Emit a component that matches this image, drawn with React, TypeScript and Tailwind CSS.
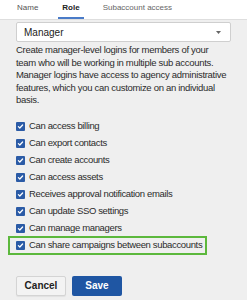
import React from "react";

const perms = [
  "Can access billing",
  "Can export contacts",
  "Can create accounts",
  "Can access assets",
  "Receives approval notification emails",
  "Can update SSO settings",
  "Can manage managers",
];

function Check() {
  return (
    <span className="w-[9px] h-[9px] rounded-[1px] bg-[#2b5ba6] flex items-center justify-center shrink-0">
      <svg width="7" height="7" viewBox="0 0 10 10" fill="none">
        <path d="M2 5.2l2 2 4-4.4" stroke="#fff" strokeWidth="1.8" strokeLinecap="round" strokeLinejoin="round" />
      </svg>
    </span>
  );
}

function Row({ label }: { label: string }) {
  return (
    <div className="h-[17px] flex items-center gap-[4px]">
      <Check />
      <span className="text-[9.5px] tracking-[-0.35px] text-[#2b2b2b]">{label}</span>
    </div>
  );
}

export default function App() {
  return (
    <div className="w-[247px] h-[300px] bg-[#efefef] overflow-hidden font-['Liberation_Sans',sans-serif]">
      <div className="h-[20px] bg-white border-b border-[#dedede] flex items-end pl-[17px] text-[8px]">
        <div className="relative pb-[5px] text-[#555] mr-[24px]">Name</div>
        <div className="relative pb-[5px] font-bold text-[#222] mr-[23px]">
          Role
          <span className="absolute left-[-4px] right-[-4px] bottom-0 h-[2px] bg-[#4a7bc8]" />
        </div>
        <div className="pb-[5px] text-[#666]">Subaccount access</div>
      </div>

      <div className="px-[16px] pt-[2px]">
        <div className="h-[20px] bg-white border border-[#cfcfcf] rounded-[2px] flex items-center justify-between pl-[7px] pr-[9px]">
          <span className="text-[10px] text-[#222]">Manager</span>
          <svg width="5" height="3" viewBox="0 0 5 3">
            <path d="M0 0h5L2.5 3z" fill="#666" />
          </svg>
        </div>

        <p className="mt-[2px] text-[9.5px] tracking-[-0.3px] leading-[12.5px] text-[#2b2b2b] whitespace-nowrap">
          Create manager-level logins for members of your
          <br />
          team who will be working in multiple sub accounts.
          <br />
          Manager logins have access to agency administrative
          <br />
          features, which you can customize on an individual
          <br />
          basis.
        </p>

        <div className="mt-[11px]">
          {perms.map((p) => (
            <Row key={p} label={p} />
          ))}
          <div className="relative">
            <span className="absolute left-[-8px] top-[-1px] w-[199px] h-[19px] border-2 border-[#5cb83c]" />
            <Row label="Can share campaigns between subaccounts" />
          </div>
        </div>

        <div className="mt-[22px] flex gap-[6px]">
          <button className="w-[50px] h-[20px] rounded-[2px] bg-[#f3f3f3] border border-[#d4d4d4] shadow-[0_1px_1px_rgba(0,0,0,0.06)] text-[10px] font-bold text-[#222]">
            Cancel
          </button>
          <button className="w-[50px] h-[20px] rounded-[2px] bg-[#1f56a3] text-[10px] font-bold text-white">
            Save
          </button>
        </div>
      </div>
    </div>
  );
}
